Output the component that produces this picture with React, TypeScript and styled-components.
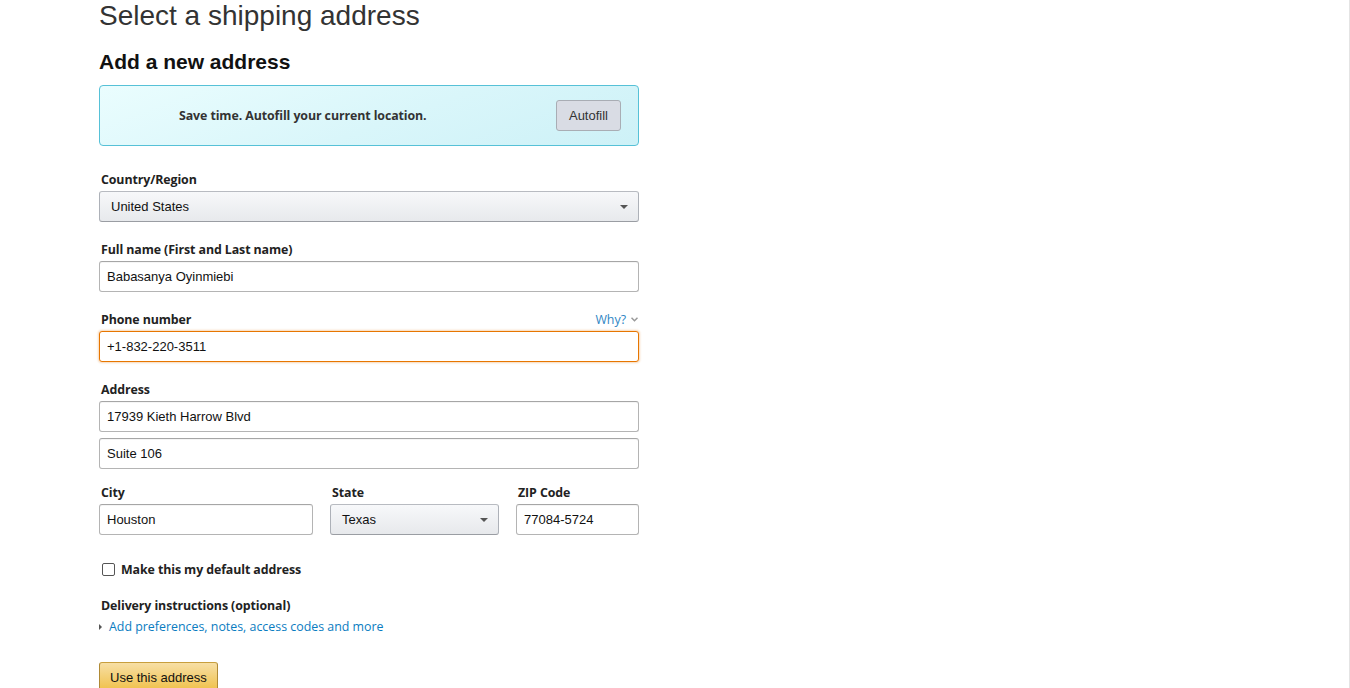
import React, { useState } from "react";
import styled, { createGlobalStyle } from "styled-components";

const GlobalStyle = createGlobalStyle`
  html, body {
    margin: 0;
    padding: 0;
    background: #fff;
    overflow: hidden;
  }
  * {
    box-sizing: border-box;
  }
`;

const Page = styled.div`
  min-height: 688px;
  border-right: 1px solid #e4e4e4;
  padding-left: 99px;
  font-family: "Open Sans", "Liberation Sans", Arial, sans-serif;
  color: #111;
`;

const Form = styled.div`
  width: 540px;
  display: flex;
  flex-direction: column;
`;

const Title = styled.h1`
  margin: 0;
  font-family: "Liberation Sans", Arial, sans-serif;
  font-size: 28px;
  line-height: 32px;
  font-weight: 400;
  color: #333;
`;

const SubTitle = styled.h2`
  margin: 18px 0 11px;
  font-family: "Liberation Sans", Arial, sans-serif;
  font-size: 21px;
  line-height: 24px;
  font-weight: 700;
  color: #111;
`;

const AutofillBox = styled.div`
  height: 61px;
  border: 1px solid #56c1d7;
  border-radius: 4px;
  background: linear-gradient(160deg, #eafdfe 0%, #d9f6fa 55%, #cdf1f7 100%);
  display: flex;
  align-items: center;
  justify-content: space-between;
  padding: 0 17px 0 79px;
`;

const AutofillText = styled.span`
  font-size: 12.4px;
  line-height: 18px;
  font-weight: 700;
  letter-spacing: -0.1px;
  color: #333;
`;

const GreyButton = styled.button`
  height: 31px;
  padding: 0 12px;
  border: 1px solid #a9adb4;
  border-radius: 3px;
  background: #d9dce4;
  font-family: "Liberation Sans", Arial, sans-serif;
  font-size: 13px;
  color: #333;
`;

const Field = styled.div<{ $top?: number }>`
  display: flex;
  flex-direction: column;
  margin-top: ${(p) => p.$top ?? 18}px;
`;

const LabelRow = styled.div`
  display: flex;
  justify-content: space-between;
  align-items: center;
  height: 19px;
  margin-bottom: 2px;
  padding-left: 2px;
`;

const Label = styled.label`
  font-size: 12.4px;
  line-height: 19px;
  font-weight: 700;
  letter-spacing: -0.1px;
  color: #222;
`;

const WhyLink = styled.a`
  display: flex;
  align-items: center;
  gap: 5px;
  font-size: 12.4px;
  color: #2f86c4;
  text-decoration: none;
  padding-right: 1px;
`;

const Input = styled.input<{ $focused?: boolean }>`
  height: 31px;
  width: 100%;
  padding: 0 7px;
  border: 1px solid ${(p) => (p.$focused ? "#e77600" : "#b4b4b4")};
  border-top-color: ${(p) => (p.$focused ? "#e77600" : "#a6a6a6")};
  border-radius: 3px;
  background: #fff;
  box-shadow: ${(p) =>
    p.$focused
      ? "0 0 2px 1px rgba(228, 121, 17, 0.3)"
      : "0 1px 0 rgba(0, 0, 0, 0.04) inset"};
  font-family: "Liberation Sans", Arial, sans-serif;
  font-size: 13px;
  color: #111;
  outline: none;
`;

const SelectBox = styled.div`
  height: 31px;
  width: 100%;
  display: flex;
  align-items: center;
  justify-content: space-between;
  padding: 0 10px 0 11px;
  border: 1px solid #adb1b8;
  border-top-color: #b8bbc1;
  border-bottom-color: #9a9da3;
  border-radius: 3px;
  background: linear-gradient(to bottom, #f7f8fa, #e7e9ec);
  font-family: "Liberation Sans", Arial, sans-serif;
  font-size: 13px;
  color: #111;
`;

const Caret = styled.span`
  width: 0;
  height: 0;
  border-left: 4px solid transparent;
  border-right: 4px solid transparent;
  border-top: 4px solid #555;
  margin-top: 1px;
`;

const Stack = styled.div`
  display: flex;
  flex-direction: column;
  gap: 6px;
`;

const Columns = styled.div`
  display: grid;
  grid-template-columns: 214px 169px 123px;
  column-gap: 17px;
  margin-top: 14px;
`;

const CheckRow = styled.label`
  display: flex;
  align-items: center;
  gap: 6px;
  margin-top: 25px;
  padding-left: 3px;
  height: 19px;
  font-size: 12.4px;
  font-weight: 700;
  letter-spacing: -0.1px;
  color: #222;
`;

const Check = styled.input`
  appearance: none;
  margin: 0;
  width: 13px;
  height: 13px;
  border: 1px solid #555;
  border-radius: 2px;
  background: #fff;
`;

const Section = styled.div`
  margin-top: 14px;
  padding-left: 2px;
`;

const Expander = styled.a`
  display: flex;
  align-items: center;
  gap: 7px;
  margin-left: -2px;
  margin-top: 1px;
  height: 21px;
  font-size: 12.4px;
  color: #0a7cc1;
  text-decoration: none;
`;

const Arrow = styled.span`
  width: 0;
  height: 0;
  border-top: 3px solid transparent;
  border-bottom: 3px solid transparent;
  border-left: 3px solid #555;
`;

const PrimaryButton = styled.button`
  align-self: flex-start;
  margin-top: 25px;
  height: 29px;
  padding: 2px 10px 0;
  border: 1px solid #a88734;
  border-color: #c89f3d #b08a35 #9c7e31;
  border-radius: 3px;
  background: linear-gradient(to bottom, #f7dfa5, #f0c14b);
  font-family: "Liberation Sans", Arial, sans-serif;
  font-size: 13px;
  color: #111;
`;

function ChevronDown() {
  return (
    <svg width="7" height="5" viewBox="0 0 7 5">
      <path d="M0.5 0.8 L3.5 3.8 L6.5 0.8" fill="none" stroke="#999" strokeWidth="1.5" />
    </svg>
  );
}

export default function App() {
  const [isDefault, setIsDefault] = useState(false);

  return (
    <>
      <GlobalStyle />
      <Page>
        <Form>
          <Title>Select a shipping address</Title>
          <SubTitle>Add a new address</SubTitle>

          <AutofillBox>
            <AutofillText>Save time. Autofill your current location.</AutofillText>
            <GreyButton>Autofill</GreyButton>
          </AutofillBox>

          <Field $top={24}>
            <LabelRow>
              <Label>Country/Region</Label>
            </LabelRow>
            <SelectBox>
              United States
              <Caret />
            </SelectBox>
          </Field>

          <Field>
            <LabelRow>
              <Label>Full name (First and Last name)</Label>
            </LabelRow>
            <Input defaultValue="Babasanya Oyinmiebi" />
          </Field>

          <Field>
            <LabelRow>
              <Label>Phone number</Label>
              <WhyLink href="#">
                Why?
                <ChevronDown />
              </WhyLink>
            </LabelRow>
            <Input $focused defaultValue="+1-832-220-3511" />
          </Field>

          <Field>
            <LabelRow>
              <Label>Address</Label>
            </LabelRow>
            <Stack>
              <Input defaultValue="17939 Kieth Harrow Blvd" />
              <Input defaultValue="Suite 106" />
            </Stack>
          </Field>

          <Columns>
            <Field $top={0}>
              <LabelRow>
                <Label>City</Label>
              </LabelRow>
              <Input defaultValue="Houston" />
            </Field>
            <Field $top={0}>
              <LabelRow>
                <Label>State</Label>
              </LabelRow>
              <SelectBox>
                Texas
                <Caret />
              </SelectBox>
            </Field>
            <Field $top={0}>
              <LabelRow>
                <Label>ZIP Code</Label>
              </LabelRow>
              <Input defaultValue="77084-5724" />
            </Field>
          </Columns>

          <CheckRow>
            <Check
              type="checkbox"
              checked={isDefault}
              onChange={(e) => setIsDefault(e.target.checked)}
            />
            Make this my default address
          </CheckRow>

          <Section>
            <Label>Delivery instructions (optional)</Label>
            <Expander href="#">
              <Arrow />
              Add preferences, notes, access codes and more
            </Expander>
          </Section>

          <PrimaryButton>Use this address</PrimaryButton>
        </Form>
      </Page>
    </>
  );
}
